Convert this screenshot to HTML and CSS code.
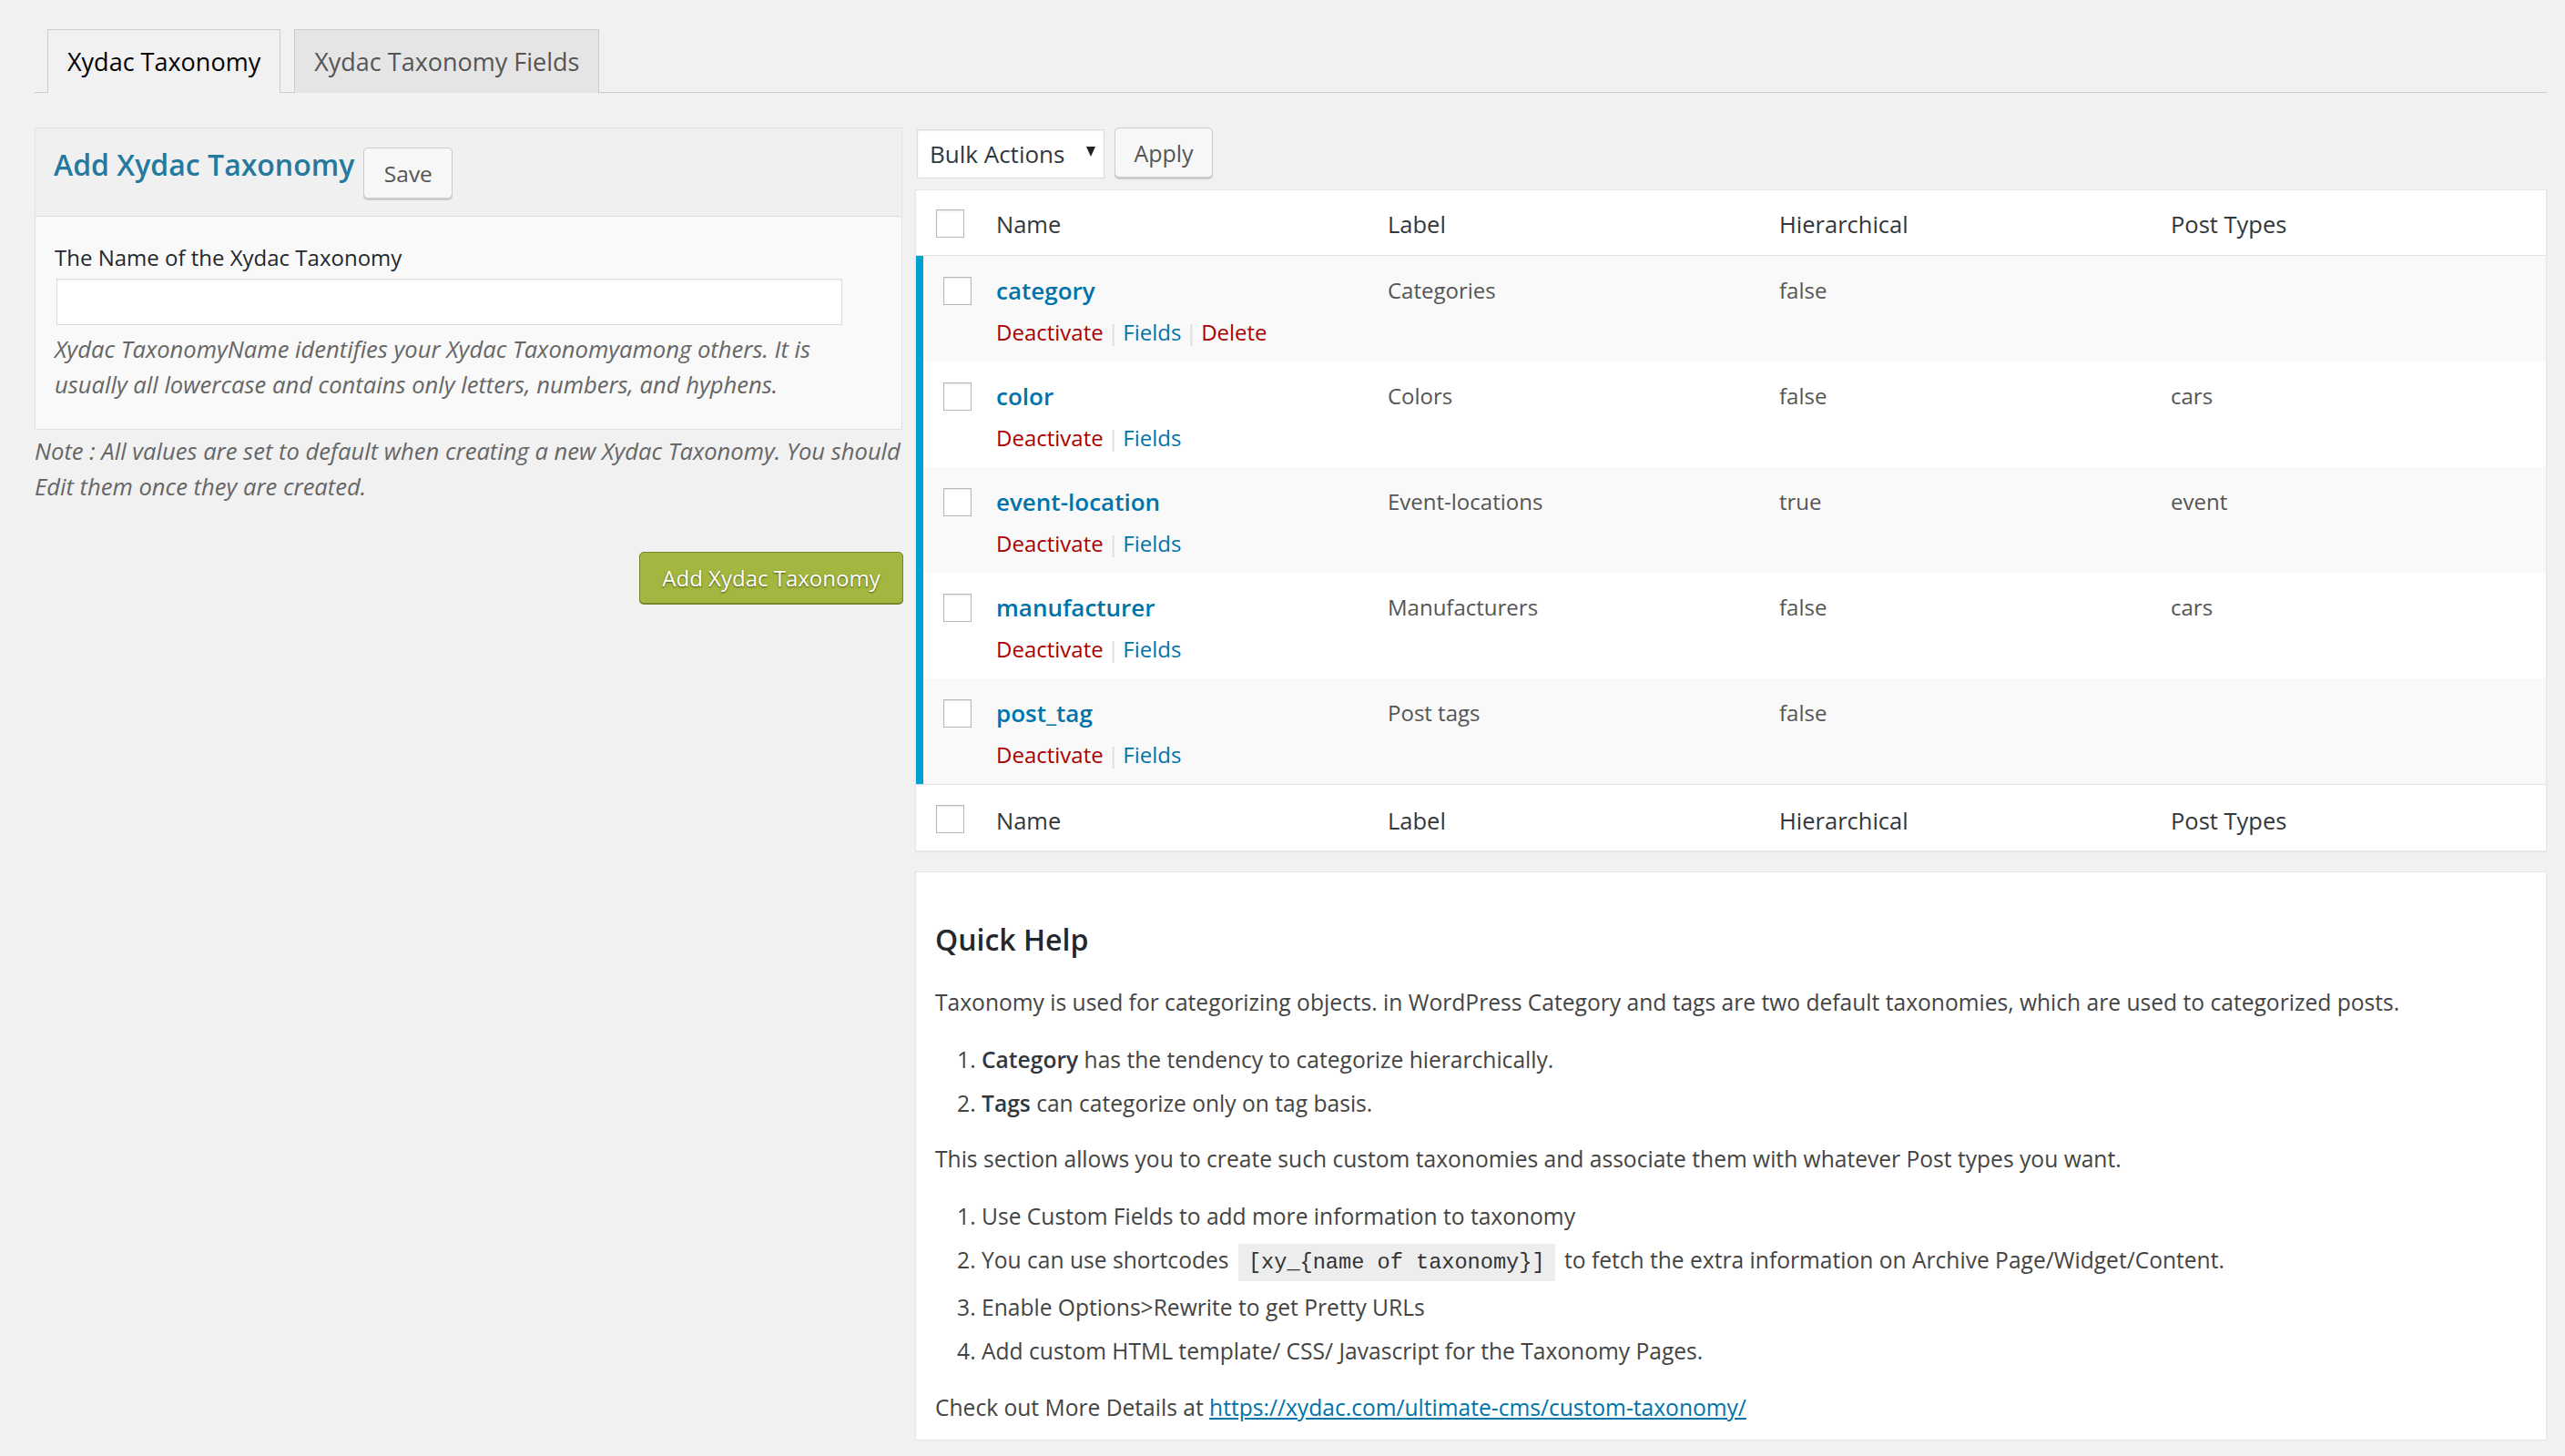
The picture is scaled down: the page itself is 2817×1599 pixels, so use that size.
FILE: index.html
```html
<!DOCTYPE html>
<html lang="en">
<head>
<meta charset="utf-8">
<title>Xydac Taxonomy</title>
<link rel="stylesheet" href="styles.css">
</head>
<body>
<div class="wrap">
  <nav class="tabs">
    <a class="tab active">Xydac Taxonomy</a>
    <a class="tab">Xydac Taxonomy Fields</a>
  </nav>

  <div class="cols">
    <div class="left">
      <div class="panel">
        <div class="panel-head">
          <h3 class="panel-title">Add Xydac Taxonomy</h3>
          <button class="btn btn-save">Save</button>
        </div>
        <div class="panel-body">
          <label class="field-label">The Name of the Xydac Taxonomy</label>
          <div class="input"></div>
          <p class="desc">Xydac TaxonomyName identifies your Xydac Taxonomyamong others. It is<br>usually all lowercase and contains only letters, numbers, and hyphens.</p>
        </div>
      </div>
      <p class="note">Note : All values are set to default when creating a new Xydac Taxonomy. You should<br>Edit them once they are created.</p>
      <div class="submit">
        <button class="btn-primary">Add Xydac Taxonomy</button>
      </div>
    </div>

    <div class="right">
      <div class="bulk">
        <div class="select"><span>Bulk Actions</span><span class="arrow"></span></div>
        <button class="btn btn-apply">Apply</button>
      </div>

      <div class="list">
        <div class="row head">
          <div class="cell check"><span class="cb"></span></div>
          <div class="cell">Name</div>
          <div class="cell">Label</div>
          <div class="cell">Hierarchical</div>
          <div class="cell">Post Types</div>
        </div>

        <div class="row item alt">
          <div class="cell check"><span class="cb"></span></div>
          <div class="cell name"><a class="title">category</a>
            <div class="actions"><a class="red">Deactivate</a> <span class="sep">|</span> <a class="blue">Fields</a> <span class="sep">|</span> <a class="red">Delete</a></div>
          </div>
          <div class="cell">Categories</div>
          <div class="cell">false</div>
          <div class="cell"></div>
        </div>

        <div class="row item">
          <div class="cell check"><span class="cb"></span></div>
          <div class="cell name"><a class="title">color</a>
            <div class="actions"><a class="red">Deactivate</a> <span class="sep">|</span> <a class="blue">Fields</a></div>
          </div>
          <div class="cell">Colors</div>
          <div class="cell">false</div>
          <div class="cell">cars</div>
        </div>

        <div class="row item alt">
          <div class="cell check"><span class="cb"></span></div>
          <div class="cell name"><a class="title">event-location</a>
            <div class="actions"><a class="red">Deactivate</a> <span class="sep">|</span> <a class="blue">Fields</a></div>
          </div>
          <div class="cell">Event-locations</div>
          <div class="cell">true</div>
          <div class="cell">event</div>
        </div>

        <div class="row item">
          <div class="cell check"><span class="cb"></span></div>
          <div class="cell name"><a class="title">manufacturer</a>
            <div class="actions"><a class="red">Deactivate</a> <span class="sep">|</span> <a class="blue">Fields</a></div>
          </div>
          <div class="cell">Manufacturers</div>
          <div class="cell">false</div>
          <div class="cell">cars</div>
        </div>

        <div class="row item alt">
          <div class="cell check"><span class="cb"></span></div>
          <div class="cell name"><a class="title">post_tag</a>
            <div class="actions"><a class="red">Deactivate</a> <span class="sep">|</span> <a class="blue">Fields</a></div>
          </div>
          <div class="cell">Post tags</div>
          <div class="cell">false</div>
          <div class="cell"></div>
        </div>

        <div class="row foot">
          <div class="cell check"><span class="cb"></span></div>
          <div class="cell">Name</div>
          <div class="cell">Label</div>
          <div class="cell">Hierarchical</div>
          <div class="cell">Post Types</div>
        </div>
      </div>

      <div class="help">
        <h2 class="help-title">Quick Help</h2>
        <p>Taxonomy is used for categorizing objects. in WordPress Category and tags are two default taxonomies, which are used to categorized posts.</p>
        <ol>
          <li><strong>Category</strong> has the tendency to categorize hierarchically.</li>
          <li><strong>Tags</strong> can categorize only on tag basis.</li>
        </ol>
        <p>This section allows you to create such custom taxonomies and associate them with whatever Post types you want.</p>
        <ol>
          <li>Use Custom Fields to add more information to taxonomy</li>
          <li>You can use shortcodes <code>[xy_{name of taxonomy}]</code> to fetch the extra information on Archive Page/Widget/Content.</li>
          <li>Enable Options&gt;Rewrite to get Pretty URLs</li>
          <li>Add custom HTML template/ CSS/ Javascript for the Taxonomy Pages.</li>
        </ol>
        <p class="last">Check out More Details at <a class="link">https://xydac.com/ultimate-cms/custom-taxonomy/</a></p>
      </div>
    </div>
  </div>
</div>
</body>
</html>
```

FILE: styles.css
```css
html, body {
  margin: 0;
  padding: 0;
}

body {
  background: #f1f1f1;
  font-family: "Open Sans", "Noto Sans", sans-serif;
  font-size: 24px;
  color: #444;
}

.wrap {
  padding: 32px 20px 0 38px;
}

/* Tabs */
.tabs {
  display: flex;
  gap: 15px;
  padding-left: 14px;
  border-bottom: 1px solid #ccc;
}

.tab {
  display: block;
  border: 1px solid #ccc;
  border-bottom: none;
  padding: 12px 21px;
  line-height: 45px;
  font-size: 27px;
  font-weight: 400;
  background: #e5e5e5;
  color: #555;
  margin-bottom: -1px;
}

.tab.active {
  background: #f1f1f1;
  color: #000;
}

/* Columns */
.cols {
  display: flex;
  gap: 14px;
  margin-top: 38px;
  align-items: flex-start;
}

.left {
  width: 953px;
  flex: none;
}

.right {
  flex: 1;
  min-width: 0;
}

/* Left panel */
.panel {
  border: 1px solid #e2e2e2;
  background: #f9f9f9;
}

.panel-head {
  display: flex;
  align-items: flex-start;
  height: 97px;
  box-sizing: border-box;
  padding: 0 20px;
  border-bottom: 1px solid #dcdcdc;
  background: #f0f0f0;
}

.panel-title {
  margin: 20px 0 0;
  line-height: 40px;
  font-size: 32px;
  font-weight: 600;
  color: #23799e;
}

.btn {
  font-family: "Open Sans", "Noto Sans", sans-serif;
  background: #f7f7f7;
  border: 1px solid #ccc;
  border-radius: 5px;
  box-shadow: 0 2px 0 #ccc;
  color: #555;
  padding: 0;
  box-sizing: border-box;
}

.btn-save {
  margin: 21px 0 0 10px;
  width: 98px;
  height: 56px;
  font-size: 24.5px;
}

.panel-body {
  padding: 27px 21px 29px;
}

.field-label {
  display: block;
  line-height: 36px;
  color: #23282d;
}

.input {
  margin: 5px 0 0 2px;
  width: 863px;
  height: 51px;
  box-sizing: border-box;
  border: 1px solid #ddd;
  background: #fff;
  box-shadow: inset 0 1px 2px rgba(0, 0, 0, 0.07);
}

.desc {
  margin: 7px 0 0;
  font-style: italic;
  font-size: 25.6px;
  color: #666;
  line-height: 39px;
  white-space: nowrap;
}

.note {
  margin: 4px 0 0;
  font-style: italic;
  font-size: 25.6px;
  color: #666;
  line-height: 39px;
  white-space: nowrap;
}

.submit {
  display: flex;
  justify-content: flex-end;
  margin-top: 52px;
  margin-right: -1px;
}

.btn-primary {
  font-family: "Open Sans", "Noto Sans", sans-serif;
  width: 290px;
  height: 57px;
  box-sizing: border-box;
  padding: 0;
  font-size: 24px;
  color: #fff;
  background: #a3b63f;
  border: 1px solid #76862a;
  border-radius: 5px;
  box-shadow: 0 1px 0 #76862a;
  text-shadow: 0 1px 2px rgba(40, 50, 0, 0.75);
}

/* Bulk actions */
.bulk {
  display: flex;
  align-items: flex-start;
  gap: 11px;
  margin-bottom: 12px;
}

.select {
  margin: 2px 0 0 2px;
  width: 206px;
  height: 54px;
  box-sizing: border-box;
  border: 1px solid #ddd;
  background: #fff;
  box-shadow: inset 0 1px 2px rgba(0, 0, 0, 0.07);
  display: flex;
  align-items: center;
  justify-content: space-between;
  padding: 0 9px 0 13px;
  font-size: 26px;
  color: #32373c;
}

.arrow {
  width: 0;
  height: 0;
  border-left: 5px solid transparent;
  border-right: 5px solid transparent;
  border-top: 11px solid #222;
  margin-top: -6px;
}

.btn-apply {
  width: 108px;
  height: 55px;
  font-size: 25px;
}

/* List table */
.list {
  border: 1px solid #e5e5e5;
  background: #fff;
  box-shadow: 0 1px 1px rgba(0, 0, 0, 0.04);
}

.row {
  display: grid;
  grid-template-columns: 70px repeat(4, 1fr);
}

.cell {
  padding: 0 18px;
  min-width: 0;
}

.cb {
  display: block;
  width: 31px;
  height: 31px;
  box-sizing: border-box;
  border: 1px solid #b4b9be;
  background: #fff;
  box-shadow: inset 0 1px 2px rgba(0, 0, 0, 0.1);
}

.head {
  border-bottom: 1px solid #e1e1e1;
}

.head .cell,
.foot .cell {
  font-size: 25.5px;
  color: #32373c;
}

.head .cell {
  padding-top: 4px;
  line-height: 67px;
}

.head .check {
  padding: 21px 0 0 22px;
}

.foot {
  border-top: 1px solid #e1e1e1;
}

.foot .cell {
  padding-top: 6px;
  line-height: 66px;
}

.foot .check {
  padding: 22px 0 0 22px;
}

.item {
  background: #fff;
  height: 116px;
}

.item.alt {
  background: #f9f9f9;
}

.item .cell {
  padding-top: 15px;
  line-height: 46px;
  color: #555;
}

.item .check {
  padding: 23px 0 0 30px;
  box-shadow: inset 8px 0 0 #00a0d2;
}

.title {
  display: block;
  height: 46px;
  line-height: 46px;
  font-size: 26px;
  font-weight: 600;
  color: #0073aa;
}

.actions {
  margin-top: 3px;
  height: 40px;
  line-height: 40px;
  font-size: 24px;
}

.red {
  color: #a00;
}

.blue {
  color: #0073aa;
}

.sep {
  color: #ddd;
  margin: 0 -2px;
}

/* Quick help */
.help {
  margin-top: 22px;
  border: 1px solid #e5e5e5;
  background: #fff;
  box-shadow: 0 1px 1px rgba(0, 0, 0, 0.04);
  padding: 51px 21px 17px;
  font-size: 24.6px;
}

.help-title {
  margin: 0 0 29px;
  font-size: 32px;
  font-weight: 600;
  line-height: 45px;
  color: #23282d;
}

.help p {
  margin: 0;
  line-height: 36px;
}

.help ol {
  margin: 27px 0 25px;
  padding-left: 51px;
  line-height: 36px;
}

.help li {
  margin-bottom: 12px;
}

.help li:last-child {
  margin-bottom: 0;
}

.help strong {
  font-weight: 600;
  color: #32373c;
}

.help .last {
  margin-top: 26px;
}

.help code {
  font-family: "Liberation Mono", "DejaVu Sans Mono", monospace;
  font-size: 23.6px;
  line-height: 38px;
  background: rgba(0, 0, 0, 0.07);
  padding: 7px 11px;
  margin: 0 4px;
  color: #333;
}

.link {
  color: #0073aa;
  text-decoration: underline;
}
```
